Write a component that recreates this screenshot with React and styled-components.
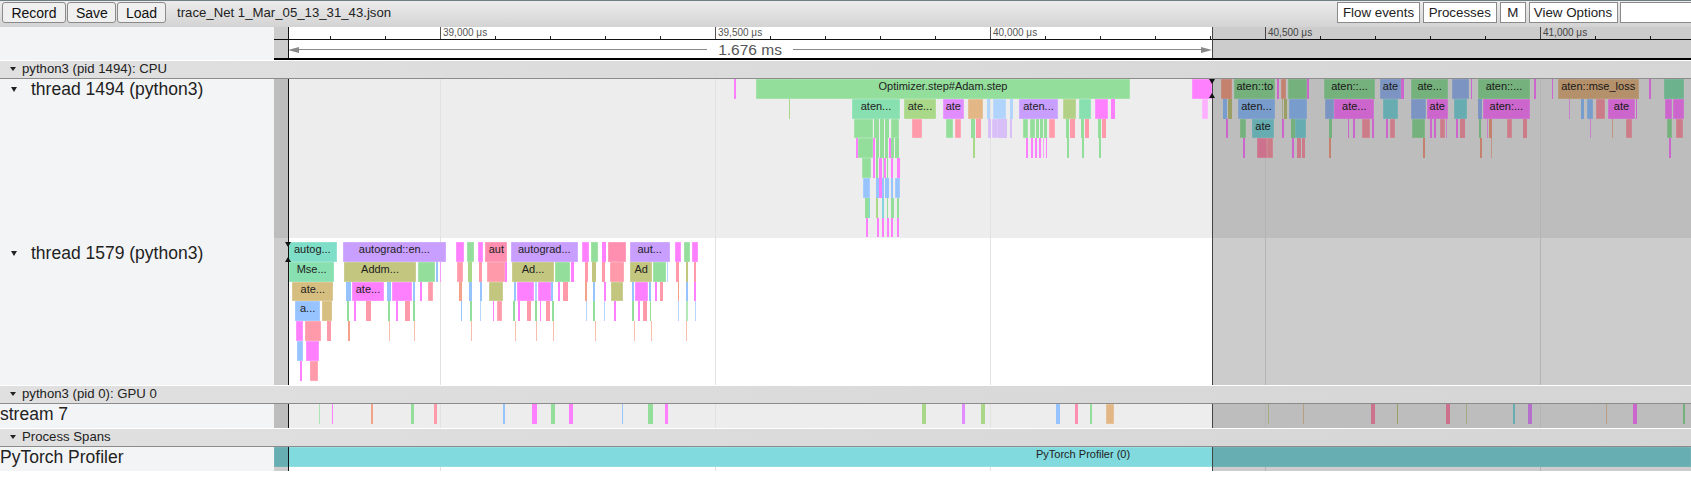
import styled, { createGlobalStyle } from "styled-components";

// timeline geometry, all x values in the data below are page px
const LABEL_W = 274;
const RANGE_START = 288;
const RANGE_END = 1212;
const GRID = [440, 715, 990, 1265, 1540];
const GRID_TEXT = ["39,000 μs", "39,500 μs", "40,000 μs", "40,500 μs", "41,000 μs"];
const MINOR = [];
for (let x = 330; x < 1691; x += 55) MINOR.push(x);

const g = "#93de9b", tg = "#88dfb0", t = "#7fdec8", ol = "#c2c67f", og = "#a8d888", p = "#ff80ff";
const v = "#c89eff", o = "#e18cff", tn = "#e2b685", ty = "#d6be80", b = "#97c4ff", pw = "#9ab9f2";
const c = "#80d8dc", r = "#ff9aab", rs = "#ff8fb0", or = "#f5a28a", lb = "#b0d4fb", lv = "#d8bff8";

const CPU_ROWS = [
  [[734, 735.7, p], [755.7, 1130.3, g, "Optimizer.step#Adam.step"], [1192, 1212, p], [1221.3, 1232.3, or], [1234.3, 1275.3, g, "aten::to"], [1276.7, 1279.3, p], [1280.7, 1286, or], [1288, 1306.7, g], [1307.3, 1309.3, p], [1324.3, 1374.7, g, "aten::..."], [1380, 1401, pw, "ate"], [1401.3, 1403.7, p], [1411, 1448.3, g, "ate..."], [1451.7, 1469, pw], [1470.7, 1472.3, p], [1477.7, 1530.3, g, "aten::..."], [1534, 1535.7, p], [1551.7, 1553.3, p], [1557.7, 1638.7, tn, "aten::mse_loss"], [1649.3, 1651, p], [1664.3, 1684, tg]],
  [[788.5, 790.3, og], [852, 900, tg, "aten..."], [904.3, 935.7, og, "ate..."], [942.7, 964, o, "ate"], [968.3, 983, tn], [987, 989.5, lb], [992.7, 1006, lb], [1010, 1013, lb], [1019.3, 1057.7, v, "aten..."], [1063.3, 1076, "#b3d186"], [1079, 1091, tg], [1095, 1107.7, p], [1111.3, 1115.3, p], [1201.7, 1208, "#ffb0ff"], [1222.7, 1227, b], [1228, 1232, ol], [1237.7, 1275.3, b, "aten..."], [1282, 1283.4, ol], [1284, 1286.7, ol], [1289.3, 1306.7, b], [1325.3, 1334, pw], [1334.3, 1374.3, p, "ate..."], [1382.7, 1397.7, c], [1411.3, 1426.3, pw], [1426.7, 1447.7, p, "ate"], [1454, 1466.7, c], [1478, 1482, pw], [1483, 1529.7, p, "aten:..."], [1569, 1570, p], [1581.3, 1584.3, b], [1586.7, 1593, b], [1596, 1605.3, r], [1608, 1635, p, "ate"], [1635.7, 1637.3, p], [1665.3, 1672, p], [1673.3, 1684, p]],
  [[854.3, 873.3, g], [874.3, 879, g], [880.3, 884.3, g], [885.3, 889.3, g], [890.7, 899, g], [911.7, 922, r], [946.3, 952.7, g], [955, 961, r], [971.3, 975, g], [976.3, 981, r], [988.3, 991, lv], [992.3, 997.7, lv], [998.3, 1002.7, lv], [1003.3, 1007.3, lv], [1010.3, 1012.3, lv], [1022.7, 1028.3, g], [1030, 1035, g], [1036, 1039, g], [1040, 1043.3, g], [1044, 1047.3, g], [1049.3, 1054.7, r], [1066, 1068.7, g], [1070, 1074.7, r], [1081.3, 1084, g], [1085, 1089, r], [1098, 1100.7, g], [1102, 1105.7, r], [1226.3, 1228, p], [1240, 1245.7, g], [1251.7, 1274.3, c, "ate"], [1282, 1284, p], [1290.7, 1295, g], [1295, 1306.3, c], [1329, 1331.7, g], [1347.7, 1349.3, p], [1353, 1354.7, p], [1362.3, 1370.3, r], [1371.7, 1373.7, p], [1386, 1388, p], [1390.3, 1395.3, r], [1412.3, 1425, g], [1430, 1431.7, p], [1433.7, 1436, p], [1440, 1445, r], [1446, 1447.3, p], [1456.3, 1458, p], [1460.3, 1464.7, r], [1479.3, 1481, g], [1486.7, 1488, p], [1489, 1491.7, or], [1506.7, 1512.3, r], [1523, 1527.3, r], [1590, 1591, p], [1612, 1613, or], [1626.3, 1632, r], [1666.7, 1672, g], [1676.3, 1682.7, r]],
  [[856.3, 858.3, p], [858.3, 873.3, g], [873.3, 875, p], [875.7, 879, g], [880.3, 884, g], [885.3, 888.3, g], [889, 890.7, p], [891, 893.7, g], [895, 898.7, g], [972.7, 974.7, og], [1026, 1028, p], [1031, 1033, p], [1035, 1037, p], [1039, 1040.7, p], [1042.7, 1044, p], [1045.7, 1047.3, p], [1066.7, 1069, g], [1081.7, 1084, g], [1098.7, 1101, g], [1242.7, 1244.7, p], [1256.7, 1266.7, rs], [1266.7, 1272.7, r], [1292.3, 1294.3, p], [1297, 1301, r], [1301.7, 1305.3, r], [1329.3, 1331, or], [1423.3, 1425, or], [1480, 1481.7, or], [1490.7, 1492, or], [1669, 1671, p]],
  [[861.7, 871, g], [873, 875, p], [876.3, 878.3, g], [879.3, 881.7, p], [882.7, 884, g], [884.3, 886, p], [886.7, 888.3, g], [890.7, 892.7, p], [896.7, 900, p]],
  [[862.7, 870.3, b], [876.3, 879, b], [879.3, 881.7, p], [882, 884, b], [885.3, 888.7, b], [891, 893.3, b], [895, 900, b]],
  [[865, 868.7, g], [868.7, 870.3, c], [876.3, 878.3, og], [882, 884, c], [886.7, 888.3, g], [891, 893.7, g], [896.7, 899, g]],
  [[865.7, 867.7, p], [876.7, 878.7, p], [882.3, 884, p], [886.7, 888.7, p], [891, 893.3, p], [896.7, 898.7, p]],
];

const THREAD_ROWS = [
  [[287.7, 337, t, "autog..."], [343, 445.7, v, "autograd::en..."], [455.5, 464.2, p], [467.4, 474.3, g], [477.5, 483, p], [485.3, 507.4, rs, "aut"], [511, 577.6, v, "autograd..."], [582.2, 589, p], [591.4, 597.8, g], [601.5, 606, p], [608.4, 626.3, rs], [629.5, 669.9, v, "aut..."], [674.5, 681.4, p], [684.1, 690.5, g], [692.4, 697.9, p]],
  [[289.3, 334, tg, "Mse..."], [344, 416, ol, "Addm..."], [418, 435.3, g], [436, 438.3, b], [439.7, 441, p], [457.3, 462.8, r], [468.3, 472.5, og], [478.9, 481.6, r], [486.7, 505, r], [505, 506.7, p], [512, 554.2, ol, "Ad..."], [555, 569.8, g], [571, 574.4, p], [584.5, 587.7, r], [592.3, 596.4, ol], [602.4, 605.1, r], [609.7, 624.4, r], [630.4, 652, ol, "Ad"], [652.9, 665.8, g], [666.7, 668, b], [676.3, 679, r], [685.5, 688.2, ol], [694.2, 696.5, r]],
  [[292.3, 333.3, ty, "ate..."], [346, 350.7, b], [351.7, 384.3, p, "ate..."], [387, 391.3, b], [392, 412, p], [413, 415.3, b], [420.3, 422, p], [428.3, 433.3, r], [459, 461.9, or], [468.8, 472, b], [479.8, 481.7, b], [488.5, 503.2, ol], [513.8, 516, b], [517, 534.4, p], [535.4, 536.8, b], [537.7, 551, p], [551.4, 553.2, b], [558.3, 560, p], [563.4, 568, r], [585.4, 587.2, or], [592.7, 595.5, b], [603.8, 605.6, p], [611.1, 623.5, ol], [631.8, 634, b], [635, 648.3, p], [648.8, 650.6, b], [654.7, 656.6, p], [659.8, 663, r], [677.7, 679.5, or], [686, 687.8, b], [694.2, 696, p]],
  [[295, 320.3, b, "a..."], [321.7, 332.3, ty], [347.3, 349.3, g], [354, 356, p], [366.3, 371, r], [388, 390.3, g], [396, 398, p], [405.3, 410, r], [413.3, 415.3, g], [460.5, 462.4, b], [470.2, 472, g], [479.8, 481.2, b], [492.7, 494.5, p], [496.8, 501.9, r], [512.8, 514.6, g], [518.4, 520.2, p], [527, 531, r], [534.9, 536.8, g], [539.5, 541.3, p], [545.5, 549.6, r], [551.9, 553.7, g], [585.8, 587.2, b], [593.2, 595, g], [603.8, 605.2, b], [614.3, 616.1, p], [632.2, 634, g], [637.7, 640, p], [643.3, 647.4, r], [649.7, 651.5, g], [678.2, 679.5, b], [686.4, 687.8, g], [695.1, 696.5, b]],
  [[296, 303.3, p], [304.7, 320.7, r], [327, 331, r], [348, 350, or], [389, 390, or], [414, 415, or], [471, 472.2, or], [515, 516, or], [536, 537, or], [553, 554, or], [594.6, 595.6, or], [633.6, 634.6, or], [651, 652, or], [686.4, 687.4, or]],
  [[297, 302.7, b], [306, 319.3, p]],
  [[300, 302, p], [310, 317.7, r]],
];

const STREAM_BARS = [
  [318.5, 319.5, g], [331.7, 333.3, p], [371.3, 373, or], [411, 413.6, g], [434, 437.4, r], [503, 504.6, b], [532.2, 536.6, p], [550.7, 555, g], [569, 573, p], [621.7, 623.3, b], [647.7, 652.6, g], [665, 668.3, p], [922.4, 925.6, og], [962, 964.8, o], [981.4, 985.2, og], [1056, 1060.2, b], [1075.3, 1078.5, rs], [1089.7, 1092.4, g], [1106.4, 1113.9, tn], [1268.3, 1269.4, ol], [1302.7, 1303.7, tn], [1370.8, 1375, rs], [1396.5, 1398, ol], [1446, 1449.6, rs], [1465.7, 1466.8, ol], [1513, 1515, c], [1528, 1531.7, o], [1606, 1607.3, tn], [1633, 1636.8, p], [1683, 1684.6, g],
];

const GlobalStyle = createGlobalStyle`
  html, body { margin: 0; padding: 0; background: #fff; }
  body { font-family: "Liberation Sans", Arial, sans-serif; overflow: hidden; }
`;

const Page = styled.div`
  width: 1691px;
  height: 488px;
  overflow: hidden;
  background: #fff;
`;

const Toolbar = styled.div`
  height: 25px;
  border-top: 1px solid #6f7d86;
  background: linear-gradient(#ececec, #d3d3d3);
  display: flex;
  align-items: flex-start;
  padding: 1px 0 0 2px;
`;

const Left = styled.div`
  display: flex;
  gap: 1px;
  align-items: center;
`;

const Right = styled.div`
  margin-left: auto;
  display: flex;
  gap: 2.5px;
  margin-right: -2px;
`;

const Button = styled.button`
  height: 21px;
  padding: 0 8px;
  border: 1px solid #8a8a8a;
  border-radius: 3px;
  background: #f0f0f0;
  color: #111;
  font: 14px "Liberation Sans", Arial, sans-serif;
  width: ${(props) => props.$w}px;
`;

const ToolButton = styled.button`
  height: 21px;
  padding: 0;
  border: 1px solid #8a8a8a;
  background: #fff;
  color: #222;
  font: 13.33px "Liberation Sans", Arial, sans-serif;
  width: ${(props) => props.$w}px;
`;

const Search = styled.input`
  width: 73px;
  height: 21px;
  box-sizing: border-box;
  border: 1px solid #8a8a8a;
  background: #fff;
`;

const Title = styled.span`
  margin-left: 10px;
  font-size: 13.2px;
  color: #222;
  line-height: 21px;
`;

const Row = styled.div`
  display: flex;
  height: ${(props) => props.$h}px;
  margin-bottom: ${(props) => props.$gap || 0}px;
`;

const Label = styled.div`
  width: ${LABEL_W}px;
  flex: none;
  box-sizing: border-box;
  background: #f3f4f6;
  color: #222;
  font-size: 17.5px;
  line-height: 20px;
  padding: ${(props) => props.$top || 0}px 0 0 ${(props) => (props.$arrow ? 11 : 0)}px;
  display: flex;
  align-items: flex-start;
`;

const Caret = styled.i`
  width: 0;
  height: 0;
  flex: none;
  border-left: 3px solid transparent;
  border-right: 3px solid transparent;
  border-top: ${(props) => (props.$small ? 4 : 5)}px solid #222;
  margin-top: ${(props) => (props.$small ? 6 : 8)}px;
  margin-right: ${(props) => (props.$small ? 6 : 14)}px;
`;

const Track = styled.div`
  flex: 1;
  position: relative;
  overflow: hidden;
  background: ${(props) => props.$bg || "#fff"};
  box-sizing: border-box;
  padding-top: ${(props) => props.$pad || 0}px;
`;

const GridLine = styled.div.attrs((props) => ({ style: { left: props.$x - LABEL_W } }))`
  position: absolute;
  top: 0;
  bottom: 0;
  width: 1px;
  background: #e2e2e2;
`;

const Dim = styled.div`
  position: absolute;
  top: 0;
  bottom: 0;
  z-index: 3;
  background: rgba(0, 0, 0, 0.2);
  ${(props) =>
    props.$side === "left"
      ? `left: 0; width: ${RANGE_START - LABEL_W}px;`
      : `left: ${RANGE_END - LABEL_W}px; right: 0;`}
`;

const RangeEdge = styled.div`
  position: absolute;
  top: 0;
  bottom: 0;
  width: 1px;
  z-index: 4;
  left: ${(props) => props.$x - LABEL_W}px;
  background: ${(props) => props.$color};
`;

const Marker = styled.div`
  position: absolute;
  z-index: 5;
  left: ${(props) => props.$x - LABEL_W - 3}px;
  top: ${(props) => props.$top}px;
  width: 0;
  height: 0;
  border-left: 3.5px solid transparent;
  border-right: 3.5px solid transparent;
  ${(props) => (props.$up ? "border-bottom: 5px solid #111;" : "border-top: 5px solid #111;")}
`;

const SliceRow = styled.div`
  position: relative;
  height: ${(props) => props.$h || 19.8}px;
`;

const Slice = styled.div.attrs((props) => {
  const width = props.$x1 - props.$x0;
  return {
    style: {
      left: props.$x0 - LABEL_W,
      width,
      background: props.$color,
      opacity: width < 1.5 ? 0.7 : 1,
      boxShadow: width < 5 ? "none" : "inset 0 0 0 0.5px rgba(255, 255, 255, 0.3)",
    },
  };
})`
  position: absolute;
  top: 0;
  bottom: 0;
  box-sizing: border-box;
  color: #222;
  font-size: 11px;
  line-height: 15.5px;
  text-align: center;
  white-space: nowrap;
  overflow: hidden;
`;

const Ruler = styled.div`
  position: relative;
  flex: 1;
  background: #fff;
  overflow: hidden;
  border-bottom: 2px solid #000;
`;

const TickBand = styled.div`
  height: 12px;
  border-bottom: 1px solid #111;
  position: relative;
`;

const Tick = styled.div.attrs((props) => ({ style: { left: props.$x - LABEL_W } }))`
  position: absolute;
  bottom: 0;
  width: 1px;
  height: ${(props) => (props.$major ? 12 : 3)}px;
  background: ${(props) => (props.$major ? "#555" : "#222")};
`;

const TickText = styled.span.attrs((props) => ({ style: { left: props.$x - LABEL_W + 3 } }))`
  position: absolute;
  top: 0;
  font-size: 10px;
  line-height: 11px;
  color: #555;
  white-space: nowrap;
`;

const Measure = styled.div`
  height: 19px;
  margin-left: ${RANGE_START - LABEL_W}px;
  width: ${RANGE_END - RANGE_START}px;
  display: flex;
  align-items: center;
`;

const MeasureLine = styled.div`
  flex: 1;
  height: 1px;
  background: #888;
`;

const MeasureHead = styled.div`
  width: 0;
  height: 0;
  border-top: 3.5px solid transparent;
  border-bottom: 3.5px solid transparent;
  ${(props) =>
    props.$end ? "border-left: 11px solid #888;" : "border-right: 11px solid #888;"}
`;

const MeasureText = styled.span`
  font-size: 15.5px;
  line-height: 19px;
  color: #555;
  margin: 0 11px;
`;

const ProcessHeader = styled.div`
  height: 17px;
  background: linear-gradient(to right, #e0e0e0, #d5d5d5);
  border-bottom: 1px solid #8c8c8c;
  color: #222;
  font-size: 13.2px;
  line-height: 15px;
  display: flex;
  padding-left: 10px;
`;

const SpanTitle = styled.div`
  position: absolute;
  z-index: 2;
  top: 0;
  left: ${1036 - LABEL_W}px;
  width: 94px;
  font-size: 11px;
  line-height: 15px;
  color: #222;
  text-align: center;
  white-space: nowrap;
`;

const Timeline = ({ edge = "#111", children, bg, pad }) => (
  <Track $bg={bg} $pad={pad}>
    {GRID.map((x) => (
      <GridLine key={x} $x={x} />
    ))}
    {children}
    <Dim $side="left" />
    <Dim $side="right" />
    <RangeEdge $x={RANGE_START} $color={edge} />
    <RangeEdge $x={RANGE_END} $color="#444" />
  </Track>
);

const FlameRows = ({ rows, h }) =>
  rows.map((row, i) => (
    <SliceRow key={i} $h={h}>
      {row.map(([x0, x1, color, text]) => (
        <Slice key={x0} $x0={x0} $x1={x1} $color={color}>
          {text}
        </Slice>
      ))}
    </SliceRow>
  ));

const App = () => (
  <Page>
    <GlobalStyle />
    <Toolbar>
      <Left>
        <Button $w={64}>Record</Button>
        <Button $w={49}>Save</Button>
        <Button $w={49}>Load</Button>
        <Title>trace_Net 1_Mar_05_13_31_43.json</Title>
      </Left>
      <Right>
        <ToolButton $w={83}>Flow events</ToolButton>
        <ToolButton $w={74.5}>Processes</ToolButton>
        <ToolButton $w={26.5}>M</ToolButton>
        <ToolButton $w={89}>View Options</ToolButton>
        <Search />
      </Right>
    </Toolbar>

    <Row $h={33} $gap={1}>
      <Label />
      <Ruler>
        <TickBand>
          {MINOR.map((x) => (
            <Tick key={x} $x={x} />
          ))}
          {GRID.map((x) => (
            <Tick key={x} $x={x} $major />
          ))}
          {GRID.map((x, i) => (
            <TickText key={x} $x={x}>
              {GRID_TEXT[i]}
            </TickText>
          ))}
        </TickBand>
        <Measure>
          <MeasureHead />
          <MeasureLine />
          <MeasureText>1.676 ms</MeasureText>
          <MeasureLine />
          <MeasureHead $end />
        </Measure>
        <Dim $side="left" />
        <Dim $side="right" />
        <RangeEdge $x={RANGE_START} $color="#111" />
        <RangeEdge $x={RANGE_END} $color="#444" />
      </Ruler>
    </Row>

    <ProcessHeader>
      <Caret $small />
      python3 (pid 1494): CPU
    </ProcessHeader>
    <Row $h={158.5}>
      <Label $arrow>
        <Caret />
        thread 1494 (python3)
      </Label>
      <Timeline bg="#ededed">
        <FlameRows rows={CPU_ROWS} />
        <Marker $x={RANGE_END} $top={0} />
        <Marker $x={RANGE_END} $top={14} $up />
      </Timeline>
    </Row>
    <Row $h={147.5} $gap={1}>
      <Label $arrow $top={5}>
        <Caret />
        thread 1579 (python3)
      </Label>
      <Timeline pad={4.5}>
        <FlameRows rows={THREAD_ROWS} />
        <Marker $x={RANGE_START} $top={4.5} />
        <Marker $x={RANGE_START} $top={19} $up />
      </Timeline>
    </Row>

    <ProcessHeader>
      <Caret $small />
      python3 (pid 0): GPU 0
    </ProcessHeader>
    <Row $h={24} $gap={1}>
      <Label>stream 7</Label>
      <Timeline bg="#ededed">
        <FlameRows rows={[STREAM_BARS]} />
      </Timeline>
    </Row>

    <ProcessHeader>
      <Caret $small />
      Process Spans
    </ProcessHeader>
    <Row $h={24}>
      <Label>PyTorch Profiler</Label>
      <Timeline>
        <FlameRows rows={[[[LABEL_W, 1691, "#80dade"]]]} />
        <SpanTitle>PyTorch Profiler (0)</SpanTitle>
      </Timeline>
    </Row>
  </Page>
);

export default App;
